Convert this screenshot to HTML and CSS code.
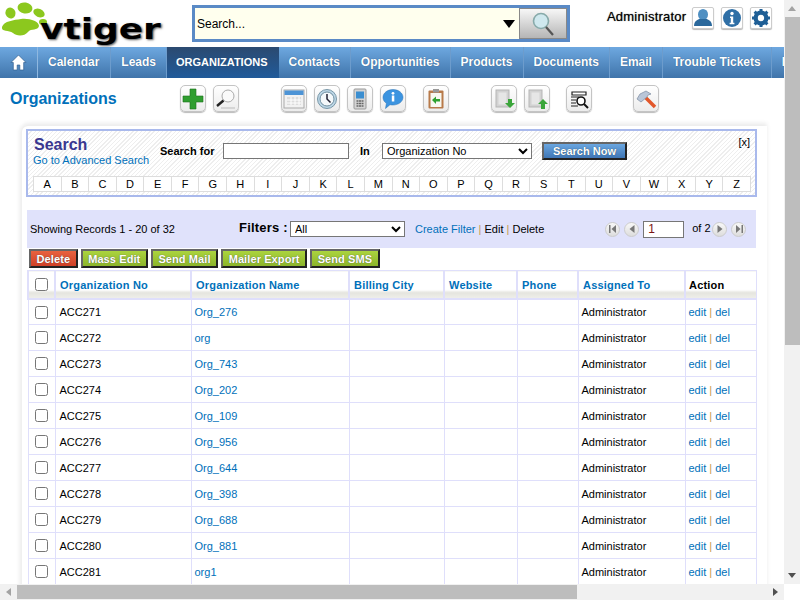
FILE: index.html
```html
<!DOCTYPE html>
<html lang="en">
<head>
<meta charset="utf-8">
<title>Organizations - vtiger</title>
<link rel="stylesheet" href="styles.css">
</head>
<body>
<div class="page">
  <header class="top">
    <div class="logo">
      <svg class="paw" width="50" height="38" viewBox="0 0 50 38">
        <ellipse cx="9.500" cy="12" rx="5" ry="5.500" fill="#8cc81e" transform="rotate(-20 9.500 12)"/>
        <ellipse cx="24" cy="7" rx="7.500" ry="5.500" fill="#8cc81e" transform="rotate(10 24 7)"/>
        <ellipse cx="38" cy="12" rx="6" ry="4" fill="#8cc81e" transform="rotate(25 38 12)"/>
        <ellipse cx="42" cy="21" rx="4" ry="3" fill="#8cc81e"/>
        <path d="M1 26C3 20 13 19 20 18 28 17 38 20 38 25 37 30 30 27 27 31 23 36 15 35 12 32 8 29 0 31 1 26Z" fill="#8cc81e"/>
      </svg>
      <span class="logo-text">vtiger</span>
    </div>
    <div class="global-search">
      <div class="search-field">
        <span>Search...</span>
        <span class="drop-arrow"></span>
      </div>
      <button class="search-go" type="button" aria-label="Search">
        <svg width="26" height="26" viewBox="0 0 26 26"><circle cx="11" cy="10" r="7.500" fill="#cfe8ee" stroke="#8aa" stroke-width="1.600"/><path d="M16 16l7 8" stroke="#555" stroke-width="2.200"/></svg>
      </button>
    </div>
    <div class="user">
      <span class="user-name">Administrator</span>
      <span class="user-btn"><svg width="20" height="20" viewBox="0 0 20 20"><ellipse cx="10" cy="6.500" rx="5" ry="5.500" fill="#4f8fc2"/><path d="M1 18c0-5 4-7 6-7h6c2 0 6 2 6 7z" fill="#2a689c"/></svg></span>
      <span class="user-btn"><svg width="20" height="20" viewBox="0 0 20 20"><circle cx="10" cy="10" r="9" fill="#2f6fa6"/><circle cx="10" cy="5.500" r="1.700" fill="#fff"/><path d="M8 8.500h3.200v6.300h1.200v1.400H7.600v-1.400h1.200v-4.900H8z" fill="#fff"/></svg></span>
      <span class="user-btn"><svg width="20" height="20" viewBox="0 0 20 20"><circle cx="10" cy="10" r="5.500" fill="none" stroke="#1f5f96" stroke-width="4"/><path d="M10 1v18M1 10h18M3.600 3.600l12.800 12.800M16.400 3.600L3.600 16.400" stroke="#1f5f96" stroke-width="3"/><circle cx="10" cy="10" r="3.200" fill="#fff"/></svg></span>
    </div>
  </header>

  <nav class="nav">
    <a class="nav-home"><svg width="17" height="17" viewBox="0 0 17 17"><path d="M8.500 1L1 8.500h2.300V16h3.900v-5h2.600v5h3.900V8.500H16z" fill="#fff" stroke="#2f5f90" stroke-width=".7"/></svg></a>
    <a class="nav-item">Calendar</a>
    <a class="nav-item">Leads</a>
    <a class="nav-item nav-active">ORGANIZATIONS</a>
    <a class="nav-item">Contacts</a>
    <a class="nav-item">Opportunities</a>
    <a class="nav-item">Products</a>
    <a class="nav-item">Documents</a>
    <a class="nav-item">Email</a>
    <a class="nav-item">Trouble Tickets</a>
    <a class="nav-item">More</a>
  </nav>

  <div class="toolbar">
    <h1 class="page-title">Organizations</h1>
    <div class="tools">
      <div class="tool-group g-create">
        <span class="tool"><svg width="22" height="22" viewBox="0 0 22 22"><path d="M8 1h6v7h7v6h-7v7H8v-7H1V8h7z" fill="#2f9e2f" stroke="#1c6f1c" stroke-width=".6"/></svg></span>
        <span class="tool"><svg width="22" height="22" viewBox="0 0 22 22"><circle cx="13" cy="8" r="6" fill="#fafafa" stroke="#aaa"/><path d="M8.500 12.500L2 18" stroke="#222" stroke-width="2.400"/><path d="M6 20h14" stroke="#ccc" stroke-width="1.500"/></svg></span>
      </div>
      <div class="tool-group g-cal">
        <span class="tool"><svg width="22" height="22" viewBox="0 0 22 22"><rect x="1" y="2" width="20" height="18" fill="#f2f2f2" stroke="#aaa"/><rect x="1.500" y="2.500" width="19" height="4.500" fill="#4d94d6"/><path d="M4 9h14v8H4z" fill="#dcdcdc"/><path d="M4 12h14M4 15h14M8 9v8M12 9v8M16 9v8" stroke="#fff"/></svg></span>
        <span class="tool"><svg width="22" height="22" viewBox="0 0 22 22"><circle cx="11" cy="11" r="9.500" fill="#bcd6e6" stroke="#7a98a8"/><circle cx="11" cy="11" r="7" fill="#f4f8fa" stroke="#6f8fa0"/><path d="M11 6v5l3.500 3.500" fill="none" stroke="#223" stroke-width="1.500"/></svg></span>
        <span class="tool"><svg width="22" height="22" viewBox="0 0 22 22"><rect x="5" y="1" width="12" height="20" rx="1" fill="#d4d4d4" stroke="#999"/><rect x="7" y="3.500" width="8" height="7" fill="#3b8ed0"/><path d="M7.500 13h2M10 13h2M12.500 13h2M7.500 15.500h2M10 15.500h2M12.500 15.500h2M7.500 18h2M10 18h2M12.500 18h2" stroke="#666" stroke-width="1.300"/></svg></span>
        <span class="tool"><svg width="22" height="22" viewBox="0 0 22 22"><path d="M11 1.500c5.500 0 10 3.500 10 7.800S16.500 17 11 17c-1 0-2 0-3-.3L3.500 20.500l.9-5.200C2.200 14 1 11.800 1 9.300 1 5 5.500 1.500 11 1.500z" fill="#3c94e0" stroke="#2670b5" stroke-width=".5"/><rect x="9.800" y="7.500" width="2.500" height="6" fill="#fff"/><circle cx="11" cy="5.300" r="1.400" fill="#fff"/></svg></span>
      </div>
      <div class="tool-group g-clip">
        <span class="tool"><svg width="22" height="22" viewBox="0 0 22 22"><rect x="3.500" y="2.500" width="15" height="18" rx="1" fill="#b87a4a"/><rect x="5.500" y="5" width="11" height="14" fill="#f8f8f0"/><rect x="8" y="1" width="6" height="3.500" fill="#999"/><path d="M7 12l4-3.500V11h4v2.500h-4V16z" fill="#2ea12e"/></svg></span>
      </div>
      <div class="tool-group g-impex">
        <span class="tool"><svg width="22" height="22" viewBox="0 0 22 22"><rect x="3" y="2" width="13" height="17" fill="#d2d2d2" stroke="#b5b5b5"/><rect x="5.500" y="4.500" width="8" height="12" fill="#e6e6e6"/><path d="M15 11h4v4h3l-5 5-5-5h3z" fill="#3aa53a"/></svg></span>
        <span class="tool"><svg width="22" height="22" viewBox="0 0 22 22"><rect x="3" y="2" width="13" height="17" fill="#d2d2d2" stroke="#b5b5b5"/><rect x="5.500" y="4.500" width="8" height="12" fill="#e6e6e6"/><path d="M17 11l5 5h-3v5h-4v-5h-3z" fill="#3aa53a"/></svg></span>
      </div>
      <div class="tool-group g-dup">
        <span class="tool"><svg width="22" height="22" viewBox="0 0 22 22"><path d="M4 4h14v3H4zM3 9h8M3 12h5M3 15h5M3 18h7" fill="#fff" stroke="#222" stroke-width="1.200"/><circle cx="13" cy="13" r="4" fill="#fff" stroke="#111" stroke-width="1.600"/><path d="M16 16l4 4" stroke="#111" stroke-width="2"/></svg></span>
      </div>
      <div class="tool-group">
        <span class="tool"><svg width="22" height="22" viewBox="0 0 22 22"><path d="M10 9l10 10" stroke="#e2572b" stroke-width="3.500"/><path d="M2 11l3-5 6-3 5 3-3 1-1 2-6 5z" fill="#b9c6d8" stroke="#7d8ba0" stroke-width=".7"/></svg></span>
      </div>
    </div>
  </div>

  <main class="panel">
    <section class="search-box">
      <div class="search-row">
        <div class="search-title">
          <div class="search-heading">Search</div>
          <a class="link">Go to Advanced Search</a>
        </div>
        <label class="search-for">Search for</label>
        <input class="search-input" type="text">
        <label class="search-in">In</label>
        <select class="search-select"><option>Organization No</option></select>
        <button class="search-now" type="button">Search Now</button>
        <span class="search-close">[x]</span>
      </div>
      <div class="alpha">
        <span>A</span><span>B</span><span>C</span><span>D</span><span>E</span><span>F</span><span>G</span><span>H</span><span>I</span><span>J</span><span>K</span><span>L</span><span>M</span><span>N</span><span>O</span><span>P</span><span>Q</span><span>R</span><span>S</span><span>T</span><span>U</span><span>V</span><span>W</span><span>X</span><span>Y</span><span>Z</span>
      </div>
    </section>

    <section class="filters">
      <span class="records">Showing Records 1 - 20 of 32</span>
      <span class="filter-label">Filters :</span>
      <select class="filter-select"><option>All</option></select>
      <span class="filter-links"><a class="link">Create Filter</a> <i>|</i> Edit <i>|</i> Delete</span>
      <span class="pager">
        <span class="pg"><svg width="10" height="10" viewBox="0 0 10 10"><path d="M1 1h1.500v8H1zM8 1v8L3.500 5z" fill="#777"/></svg></span>
        <span class="pg"><svg width="10" height="10" viewBox="0 0 10 10"><path d="M7.500 1v8L2.500 5z" fill="#777"/></svg></span>
        <input class="page-input" type="text" value="1">
        <span class="of">of 2</span>
        <span class="pg"><svg width="10" height="10" viewBox="0 0 10 10"><path d="M2.500 1v8l5-4z" fill="#777"/></svg></span>
        <span class="pg"><svg width="10" height="10" viewBox="0 0 10 10"><path d="M9 1H7.500v8H9zM2 1v8l4.500-4z" fill="#777"/></svg></span>
      </span>
    </section>

    <div class="actions">
      <button class="act act-red" type="button">Delete</button>
      <button class="act" type="button">Mass Edit</button>
      <button class="act" type="button">Send Mail</button>
      <button class="act" type="button">Mailer Export</button>
      <button class="act" type="button">Send SMS</button>
    </div>

    <table class="list">
      <colgroup>
        <col class="c-check"><col class="c-no"><col class="c-name"><col class="c-city"><col class="c-web"><col class="c-phone"><col class="c-owner"><col class="c-act">
      </colgroup>
      <thead>
        <tr>
          <th class="center"><input class="check" type="checkbox"></th>
          <th>Organization No</th><th>Organization Name</th><th>Billing City</th><th>Website</th><th>Phone</th><th>Assigned To</th><th class="th-plain">Action</th>
        </tr>
      </thead>
      <tbody>
        <tr><td class="center"><input class="check" type="checkbox"></td><td class="td-no">ACC271</td><td><a class="link">Org_276</a></td><td></td><td></td><td></td><td>Administrator</td><td><a class="link">edit</a> <i>|</i> <a class="link">del</a></td></tr>
        <tr><td class="center"><input class="check" type="checkbox"></td><td class="td-no">ACC272</td><td><a class="link">org</a></td><td></td><td></td><td></td><td>Administrator</td><td><a class="link">edit</a> <i>|</i> <a class="link">del</a></td></tr>
        <tr><td class="center"><input class="check" type="checkbox"></td><td class="td-no">ACC273</td><td><a class="link">Org_743</a></td><td></td><td></td><td></td><td>Administrator</td><td><a class="link">edit</a> <i>|</i> <a class="link">del</a></td></tr>
        <tr><td class="center"><input class="check" type="checkbox"></td><td class="td-no">ACC274</td><td><a class="link">Org_202</a></td><td></td><td></td><td></td><td>Administrator</td><td><a class="link">edit</a> <i>|</i> <a class="link">del</a></td></tr>
        <tr><td class="center"><input class="check" type="checkbox"></td><td class="td-no">ACC275</td><td><a class="link">Org_109</a></td><td></td><td></td><td></td><td>Administrator</td><td><a class="link">edit</a> <i>|</i> <a class="link">del</a></td></tr>
        <tr><td class="center"><input class="check" type="checkbox"></td><td class="td-no">ACC276</td><td><a class="link">Org_956</a></td><td></td><td></td><td></td><td>Administrator</td><td><a class="link">edit</a> <i>|</i> <a class="link">del</a></td></tr>
        <tr><td class="center"><input class="check" type="checkbox"></td><td class="td-no">ACC277</td><td><a class="link">Org_644</a></td><td></td><td></td><td></td><td>Administrator</td><td><a class="link">edit</a> <i>|</i> <a class="link">del</a></td></tr>
        <tr><td class="center"><input class="check" type="checkbox"></td><td class="td-no">ACC278</td><td><a class="link">Org_398</a></td><td></td><td></td><td></td><td>Administrator</td><td><a class="link">edit</a> <i>|</i> <a class="link">del</a></td></tr>
        <tr><td class="center"><input class="check" type="checkbox"></td><td class="td-no">ACC279</td><td><a class="link">Org_688</a></td><td></td><td></td><td></td><td>Administrator</td><td><a class="link">edit</a> <i>|</i> <a class="link">del</a></td></tr>
        <tr><td class="center"><input class="check" type="checkbox"></td><td class="td-no">ACC280</td><td><a class="link">Org_881</a></td><td></td><td></td><td></td><td>Administrator</td><td><a class="link">edit</a> <i>|</i> <a class="link">del</a></td></tr>
        <tr><td class="center"><input class="check" type="checkbox"></td><td class="td-no">ACC281</td><td><a class="link">org1</a></td><td></td><td></td><td></td><td>Administrator</td><td><a class="link">edit</a> <i>|</i> <a class="link">del</a></td></tr>
      </tbody>
    </table>
  </main>
</div>
<div class="sb sb-v" aria-hidden="true">
  <span class="sb-btn"><span class="arr arr-up"></span></span>
  <span class="sb-track"><span class="sb-thumb"></span></span>
  <span class="sb-btn"><span class="arr arr-down"></span></span>
</div>
<div class="sb sb-h" aria-hidden="true">
  <span class="sb-btn"><span class="arr arr-left"></span></span>
  <span class="sb-track"><span class="sb-thumb"></span></span>
  <span class="sb-btn"><span class="arr arr-right"></span></span>
</div>
</body>
</html>
```
FILE: styles.css
```css
html, body { margin: 0; padding: 0; background: #fff; overflow: hidden; height: 100%; }
body { font-family: "Liberation Sans", Arial, sans-serif; font-size: 11px; color: #000; }

.sb { position: fixed; display: flex; background: #f1f1f1; }
.sb-v { top: 0; right: 0; width: 16px; height: 584px; flex-direction: column; }
.sb-h { left: 0; bottom: 0; width: 784px; height: 16px; }
.sb-btn { flex: none; width: 16px; height: 17px; display: flex; align-items: center; justify-content: center; }
.sb-h .sb-btn { width: 17px; height: 16px; }
.sb-track { flex: 1; display: flex; }
.sb-thumb { display: block; background: #bdbdbd; }
.sb-v .sb-thumb { width: 15px; height: 328px; margin-left: 1px; }
.sb-h .sb-thumb { width: 560px; height: 14px; margin-top: 1px; }
.arr { width: 0; height: 0; border: 4px solid transparent; }
.arr-up { border-bottom: 5px solid #a3a3a3; border-top: 0; }
.arr-down { border-top: 5px solid #505050; border-bottom: 0; }
.arr-left { border-right: 5px solid #a3a3a3; border-left: 0; }
.arr-right { border-left: 5px solid #505050; border-right: 0; }

.page { width: 1074px; min-height: 980px; }
.link { color: #0070ba; }
i { font-style: normal; color: #c79a4c; }

.top { height: 47px; display: flex; }
.logo { width: 192px; height: 47px; display: flex; flex: none; }
.paw { margin: 1px 0 0 1px; flex: none; }
.logo-text { font-family: "DejaVu Sans", sans-serif; font-weight: bold; font-size: 29px; line-height: 40px; margin: 9px 0 0 -11px; height: 40px; text-shadow: 1px 1px 2px #555; transform: scaleX(1.24); transform-origin: left center; }

.global-search { width: 372px; height: 31px; margin-top: 5px; border: 3px solid #5a8ac6; display: flex; flex: none; background: #ffffee; }
.search-field { flex: 1; display: flex; align-items: center; justify-content: space-between; padding: 0 4px 0 2px; font-size: 12px; }
.drop-arrow { width: 0; height: 0; border-left: 6px solid transparent; border-right: 6px solid transparent; border-top: 8px solid #000; }
.search-go { width: 48px; padding: 0; border: 1px solid #888; background: linear-gradient(#f7f7f7, #b5b5b5); display: flex; align-items: center; justify-content: center; }

.user { display: flex; margin: 7px 0 0 37px; gap: 7px; }
.user-name { font-size: 13px; line-height: 20px; letter-spacing: .2px; margin-right: -1px; width: 79px; white-space: nowrap; text-shadow: 0 0 1px #555; }
.user-btn { width: 20px; height: 20px; border: 1px solid #ccc; border-radius: 2px; box-shadow: 0 1px 1px #bbb; display: flex; align-items: center; justify-content: center; background: #fff; }

.nav { height: 31px; background: linear-gradient(#6ea8e0, #3f74aa); display: flex; align-items: stretch; }
.nav-home { width: 38px; flex: none; border-right: 1px solid #8fb8e0; box-sizing: border-box; display: flex; align-items: center; justify-content: center; }
.nav-item { color: #fff; font-size: 12px; font-weight: bold; line-height: 31px; padding: 0 10px; border-right: 1px solid #6d9ccc; text-shadow: 0 0 1px #24507c; white-space: nowrap; }
.nav-item:nth-child(2) { padding-right: 11px; }
.nav-item.nav-active { background: linear-gradient(#2b4a70, #205a9a); font-size: 11px; border-right: none; padding: 0 11px 0 9px; }

.toolbar { height: 42px; display: flex; align-items: flex-start; }
.page-title { margin: 11px 0 0 10px; width: 170px; flex: none; font-size: 16px; line-height: 19px; font-weight: bold; color: #0070ba; }
.tools { display: flex; margin-top: 7px; }
.tool-group { display: flex; gap: 7px; }
.g-create { margin-right: 42px; }
.g-cal { margin-right: 17px; }
.g-clip { margin-right: 42px; }
.g-impex { margin-right: 16px; }
.g-dup { margin-right: 41px; }
.tool { width: 24px; height: 25px; border: 1px solid #c4c4c4; border-radius: 5px; box-shadow: 0 1px 1px #bbb; background: linear-gradient(#fff, #ececec); display: flex; align-items: center; justify-content: center; }

.panel { width: 745px; margin: 6px 0 0 22px; min-height: 700px; padding: 3px 11px 0 4px; box-sizing: border-box; border-radius: 6px 0 0 0; box-shadow: 0 -3px 4px #ececec, -3px 0 4px #f2f2f2; background: #fff; }

.search-box { width: 731px; height: 68px; box-sizing: border-box; border: 2px solid #a9b9ec; padding: 0 5px; background: repeating-linear-gradient(135deg, #fff, #fff 2px, #eee 2px, #eee 3px); }
.search-row { height: 45px; display: flex; align-items: flex-start; position: relative; }
.search-title { width: 127px; flex: none; padding-top: 5px; }
.search-heading { font-size: 16px; line-height: 18px; font-weight: bold; color: #3a3790; margin-left: 1px; }
.search-for { margin-top: 14px; width: 63px; flex: none; font-weight: bold; }
.search-input { width: 126px; height: 16px; box-sizing: border-box; padding: 0; margin: 12px 0 0; border: 1px solid #767676; flex: none; }
.search-in { margin: 14px 0 0 11px; width: 22px; flex: none; font-weight: bold; }
.search-select { width: 150px; height: 16px; margin: 12px 0 0; font-family: inherit; font-size: 11px; background: #fff; flex: none; padding: 0; }
.search-now { width: 85px; height: 18px; margin: 11px 0 0 10px; border-width: 2px; border-style: solid; border-color: #666 #222 #222 #666; padding: 0; background: linear-gradient(#6aa6e0, #3f76b5); color: #fff; font: bold 11px "Liberation Sans", Arial, sans-serif; text-shadow: 0 0 1px #245; flex: none; }
.search-close { position: absolute; right: 0; top: 5px; }

.alpha { display: grid; grid-template-columns: repeat(26, 1fr); width: 717px; }
.alpha span { height: 14px; line-height: 14px; text-align: center; background: #fff; border: 1px solid #ddd; margin-right: -1px; font-size: 11px; }

.filters { width: 729px; height: 38px; margin-top: 13px; margin-left: 1px; background: #e0e2fb; display: flex; align-items: center; }
.records { margin-left: 3px; width: 209px; flex: none; }
.filter-label { font-size: 13px; letter-spacing: .2px; font-weight: bold; width: 51px; flex: none; margin-top: -3px; white-space: nowrap; }
.filter-select { width: 115px; height: 16px; font-family: inherit; font-size: 11px; background: #fff; padding: 0; flex: none; }
.filter-links { margin-left: 10px; white-space: nowrap; }
.pager { margin-left: 61px; display: flex; align-items: center; flex: none; }
.pg { width: 13px; height: 13px; border-radius: 50%; border: 1px solid #ccc; background: linear-gradient(#f8f8f8, #ddd); display: flex; align-items: center; justify-content: center; margin-right: 4px; }
.page-input { width: 41px; height: 17px; box-sizing: border-box; margin: 0; padding: 0 4px; border: 1px solid #767676; font: 12px "Liberation Sans", Arial, sans-serif; color: #7a1414; }
.of { width: 20px; margin-left: 8px; margin-top: -2px; font-size: 11px; white-space: nowrap; }

.actions { height: 21px; margin-top: 1px; padding-left: 3px; display: flex; gap: 3px; align-items: flex-start; }
.act { height: 19px; box-sizing: border-box; padding: 0 5.500px; border-width: 2px; border-style: solid; border-color: #666 #222 #222 #666; background: linear-gradient(#abd43f, #8cb52a); color: #fff; font: bold 11px "Liberation Sans", Arial, sans-serif; text-shadow: 0 0 1px #444; letter-spacing: .1px; white-space: nowrap; }
.act-red { background: linear-gradient(#e8623f, #cf4026); }

.list { width: 728px; margin-left: 1px; border-collapse: collapse; table-layout: fixed; }
.c-check { width: 27px; }
.c-no { width: 136px; }
.c-name { width: 158px; }
.c-city { width: 95px; }
.c-web { width: 73px; }
.c-phone { width: 61px; }
.c-owner { width: 107px; }
.c-act { width: 71px; }
.list th { height: 28px; box-sizing: border-box; border: 1px solid #dfdffb; border-left-width: 2px; border-bottom-width: 2px; padding: 2px 0 0 4px; text-align: left; color: #0070ba; font-size: 11px; background: linear-gradient(#fff 0, #fff 68%, #e4e4de 78%, #efefea 100%); letter-spacing: .2px; }
.list th.th-plain { color: #000; padding-left: 3px; }
.list td { height: 26px; box-sizing: border-box; border: 1px solid #dfdffb; padding: 0 0 0 3px; }
.list td.td-no { padding-left: 4px; }
.list .center { padding: 0; text-align: center; }
.check { width: 13px; height: 13px; margin: 0; vertical-align: middle; }
```
